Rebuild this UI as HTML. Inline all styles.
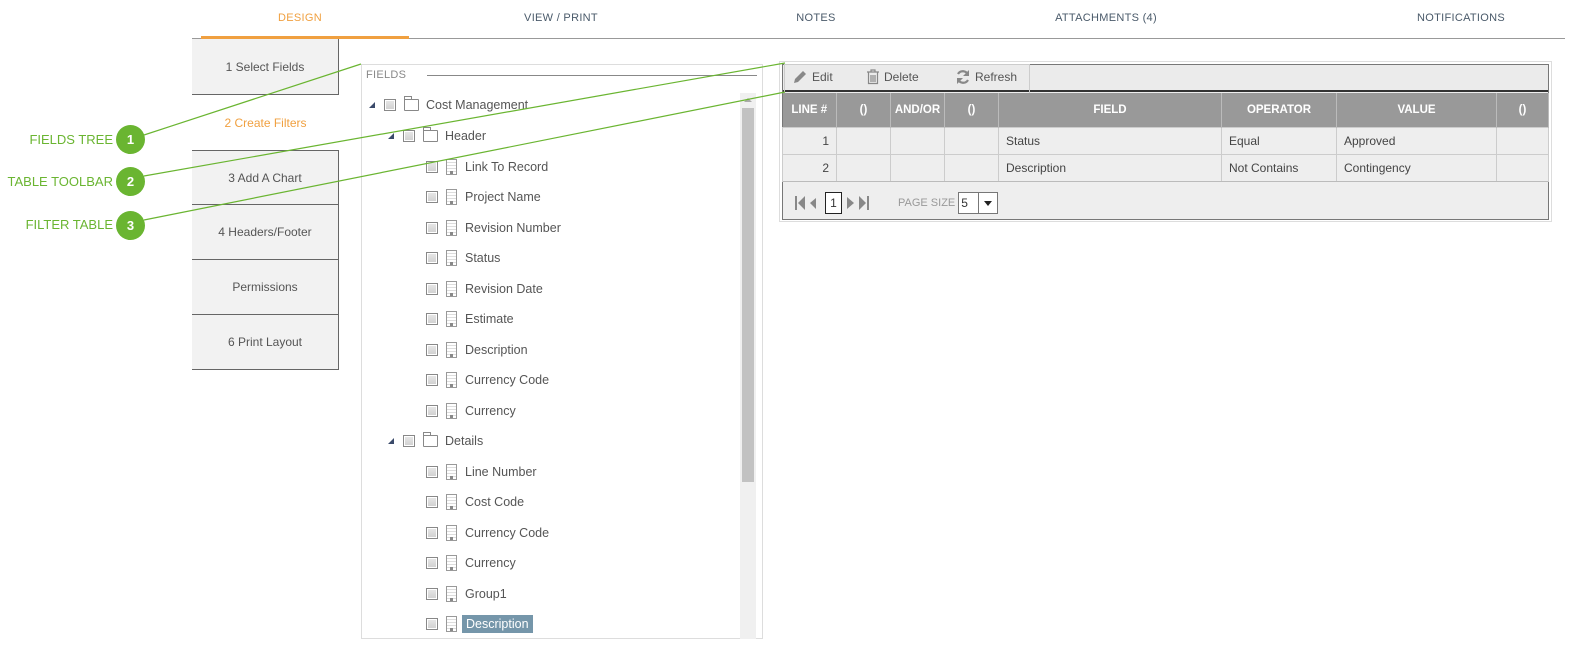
<!DOCTYPE html>
<html><head><style>
*{margin:0;padding:0;box-sizing:border-box}
body{width:1593px;height:654px;background:#fff;font-family:"Liberation Sans",sans-serif;position:relative;overflow:hidden;color:#555}
.a{position:absolute}
.tab{position:absolute;top:12px;font-size:11px;color:#4a5a6a;letter-spacing:.3px;transform:translateX(-50%)}
.step{position:absolute;left:192px;width:147px;background:#f2f2f2;border-right:1px solid #666;border-bottom:1px solid #666;font-size:12px;color:#555;display:flex;align-items:center;justify-content:center}
.lbl{position:absolute;right:1480px;font-size:13px;color:#6ab531}
.cir{position:absolute;left:116px;width:29px;height:29px;border-radius:50%;background:#6ab531;color:#fff;font-weight:bold;font-size:13px;display:flex;align-items:center;justify-content:center}
.row{position:absolute;font-size:12.5px;color:#555;display:flex;align-items:center;height:20px}
.cb{width:12px;height:12px;border:1px solid #888;background:linear-gradient(#e8e8e8,#cfcfcf);box-shadow:inset 0 0 0 1px #fff;margin-right:8px}
.fo{width:15px;height:12px;border:1px solid #888;border-radius:1px;margin-right:7px;position:relative;background:#fff}
.fo:before{content:"";position:absolute;left:-1px;top:-4px;width:6px;height:3px;border:1px solid #888;border-bottom:none}
.doc{width:11px;height:16px;border:1px solid #999;margin-right:8px;background:repeating-linear-gradient(#fff 0 2px,#ddd 2px 3px);position:relative}
.doc:after{content:"";position:absolute;left:3px;bottom:0;width:3px;height:3px;background:#888}
.tri{width:0;height:0;border-left:6px solid transparent;border-bottom:6px solid #3a4a6a;margin-right:9px}
table{border-collapse:collapse;position:absolute;left:782px;top:93px;width:767px;font-size:12px}
th{background:#999;color:#fff;font-weight:bold;height:34px;border-right:1px solid #bbb;font-size:11.5px}
td{height:27px;border:1px solid #ccc;padding:0 7px;color:#444}
</style></head><body>
<div class="tab" style="left:300px;color:#f0a040">DESIGN</div>
<div class="tab" style="left:561px">VIEW / PRINT</div>
<div class="tab" style="left:816px">NOTES</div>
<div class="tab" style="left:1106px">ATTACHMENTS (4)</div>
<div class="tab" style="left:1461px">NOTIFICATIONS</div>
<div class="a" style="left:192px;top:38px;width:1373px;height:1px;background:#999"></div>
<div class="a" style="left:201px;top:36px;width:208px;height:3px;background:#f0a040"></div>

<div class="step" style="top:39px;height:56px">1 Select Fields</div>
<div class="a" style="left:192px;top:95px;width:147px;height:55px;display:flex;align-items:center;justify-content:center;font-size:12px;color:#f0a040">2 Create Filters</div>
<div class="step" style="top:150px;height:55px;border-top:1px solid #666">3 Add A Chart</div>
<div class="step" style="top:205px;height:55px">4 Headers/Footer</div>
<div class="step" style="top:260px;height:55px">Permissions</div>
<div class="step" style="top:315px;height:55px">6 Print Layout</div>

<div class="a" style="left:361px;top:64px;width:402px;height:575px;border:1px solid #ddd"></div>
<div class="a" style="left:366px;top:69px;font-size:11px;color:#888;letter-spacing:.3px">FIELDS</div>
<div class="a" style="left:427px;top:75px;width:330px;height:1px;background:#888"></div>
<div class="a" style="left:740px;top:93px;width:16px;height:546px;background:#f0f0f0"></div>
<div class="a" style="left:742px;top:108px;width:12px;height:374px;background:#c2c2c2"></div>
<div class="a" style="left:744px;top:98px;border-left:4px solid transparent;border-right:4px solid transparent;border-bottom:4px solid #aaa"></div>

<div class="row" style="left:369px;top:95px"><div class="tri"></div><div class="cb"></div><div class="fo"></div>Cost Management</div>
<div class="row" style="left:388px;top:126px"><div class="tri"></div><div class="cb"></div><div class="fo"></div>Header</div>
<div class="row" style="left:426px;top:157px"><div class="cb"></div><div class="doc"></div>Link To Record</div>
<div class="row" style="left:426px;top:187px"><div class="cb"></div><div class="doc"></div>Project Name</div>
<div class="row" style="left:426px;top:218px"><div class="cb"></div><div class="doc"></div>Revision Number</div>
<div class="row" style="left:426px;top:248px"><div class="cb"></div><div class="doc"></div>Status</div>
<div class="row" style="left:426px;top:279px"><div class="cb"></div><div class="doc"></div>Revision Date</div>
<div class="row" style="left:426px;top:309px"><div class="cb"></div><div class="doc"></div>Estimate</div>
<div class="row" style="left:426px;top:340px"><div class="cb"></div><div class="doc"></div>Description</div>
<div class="row" style="left:426px;top:370px"><div class="cb"></div><div class="doc"></div>Currency Code</div>
<div class="row" style="left:426px;top:401px"><div class="cb"></div><div class="doc"></div>Currency</div>
<div class="row" style="left:388px;top:431px"><div class="tri"></div><div class="cb"></div><div class="fo"></div>Details</div>
<div class="row" style="left:426px;top:462px"><div class="cb"></div><div class="doc"></div>Line Number</div>
<div class="row" style="left:426px;top:492px"><div class="cb"></div><div class="doc"></div>Cost Code</div>
<div class="row" style="left:426px;top:523px"><div class="cb"></div><div class="doc"></div>Currency Code</div>
<div class="row" style="left:426px;top:553px"><div class="cb"></div><div class="doc"></div>Currency</div>
<div class="row" style="left:426px;top:584px"><div class="cb"></div><div class="doc"></div>Group1</div>
<div class="row" style="left:426px;top:614px"><div class="cb"></div><div class="doc"></div><span style="background:#7596aa;color:#fff;padding:2px 4px;margin-left:-3px">Description</span></div>

<div class="a" style="left:779px;top:61px;width:773px;height:161px;border:1px solid #ddd"></div>
<div class="a" style="left:782px;top:64px;width:767px;height:156px;border:1px solid #777;background:#eee"></div>
<div class="a" style="left:783px;top:65px;width:765px;height:27px;background:#ebebeb;border-bottom:2px solid #333"></div>
<div class="a" style="left:784px;top:64px;width:246px;height:32px;border:1px solid #ccc"></div>
<div class="a" style="left:792px;top:69px;font-size:12px;color:#555;display:flex;align-items:center;gap:4px">
<svg width="16" height="16" viewBox="0 0 16 16"><path d="M2 14l1-4 8-8 3 3-8 8z" fill="#888"/></svg>Edit</div>
<div class="a" style="left:866px;top:69px;font-size:12px;color:#555;display:flex;align-items:center;gap:4px">
<svg width="14" height="16" viewBox="0 0 14 16"><path d="M1 3h12M5 3V1h4v2M2.5 3.5v11h9v-11M5 6v7M7 6v7M9 6v7" stroke="#888" fill="none" stroke-width="1.2"/></svg>Delete</div>
<div class="a" style="left:955px;top:69px;font-size:12px;color:#555;display:flex;align-items:center;gap:4px">
<svg width="16" height="16" viewBox="0 0 16 16"><path d="M13 6A5.5 5.5 0 0 0 3 5M3 10a5.5 5.5 0 0 0 10 1" stroke="#888" fill="none" stroke-width="2.2"/><path d="M14 1v6h-6zM2 15V9h6z" fill="#888"/></svg>Refresh</div>

<table>
<tr><th style="width:54px">LINE #</th><th style="width:54px">()</th><th style="width:54px">AND/OR</th><th style="width:54px">()</th><th style="width:223px">FIELD</th><th style="width:115px">OPERATOR</th><th style="width:160px">VALUE</th><th>()</th></tr>
<tr><td style="text-align:right">1</td><td></td><td></td><td></td><td>Status</td><td>Equal</td><td>Approved</td><td></td></tr>
<tr><td style="text-align:right">2</td><td></td><td></td><td></td><td>Description</td><td>Not Contains</td><td>Contingency</td><td></td></tr>
</table>
<div class="a" style="left:783px;top:181px;width:765px;height:1px;background:#bbb"></div>
<div class="a" style="left:795px;top:192px;display:flex;align-items:center;gap:3px;color:#888">
<svg width="30" height="16" viewBox="0 0 30 16"><rect x="0" y="1" width="2" height="14" fill="#888"/><path d="M10 1v14L3 8z" fill="#888"/><path d="M20 3v11L14 8z" fill="#888" transform="translate(1,0)"/></svg>
<div style="width:17px;height:22px;border:1px solid #222;background:#fff;font-size:12px;color:#333;display:flex;align-items:center;justify-content:center;margin-left:-3px">1</div>
<svg width="30" height="16" viewBox="0 0 30 16"><path d="M2 2v12l7-6z" fill="#888"/><path d="M14 1v14l7-7z" fill="#888"/><rect x="22" y="1" width="2" height="14" fill="#888"/></svg>
<span style="font-size:11px;color:#999;margin-left:20px">PAGE SIZE</span>
<div style="width:40px;height:22px;border:1px solid #777;background:#fff;display:flex;font-size:12px;color:#333"><span style="width:20px;padding:3px 2px;border-right:1px solid #777">5</span><span style="flex:1;display:flex;align-items:center;justify-content:center"><span style="border-left:4px solid transparent;border-right:4px solid transparent;border-top:5px solid #222"></span></span></div>
</div>

<div class="lbl" style="top:132px">FIELDS TREE</div>
<div class="lbl" style="top:174px">TABLE TOOLBAR</div>
<div class="lbl" style="top:217px">FILTER TABLE</div>
<div class="cir" style="top:125px">1</div>
<div class="cir" style="top:167px">2</div>
<div class="cir" style="top:211px">3</div>
<svg class="a" style="left:0;top:0" width="1593" height="654"><g stroke="#6ab531" stroke-width="1.2" fill="none"><line x1="144" y1="135" x2="361" y2="64"/><line x1="144" y1="176" x2="785" y2="63"/><line x1="144" y1="220" x2="785" y2="92"/></g></svg>
</body></html>
